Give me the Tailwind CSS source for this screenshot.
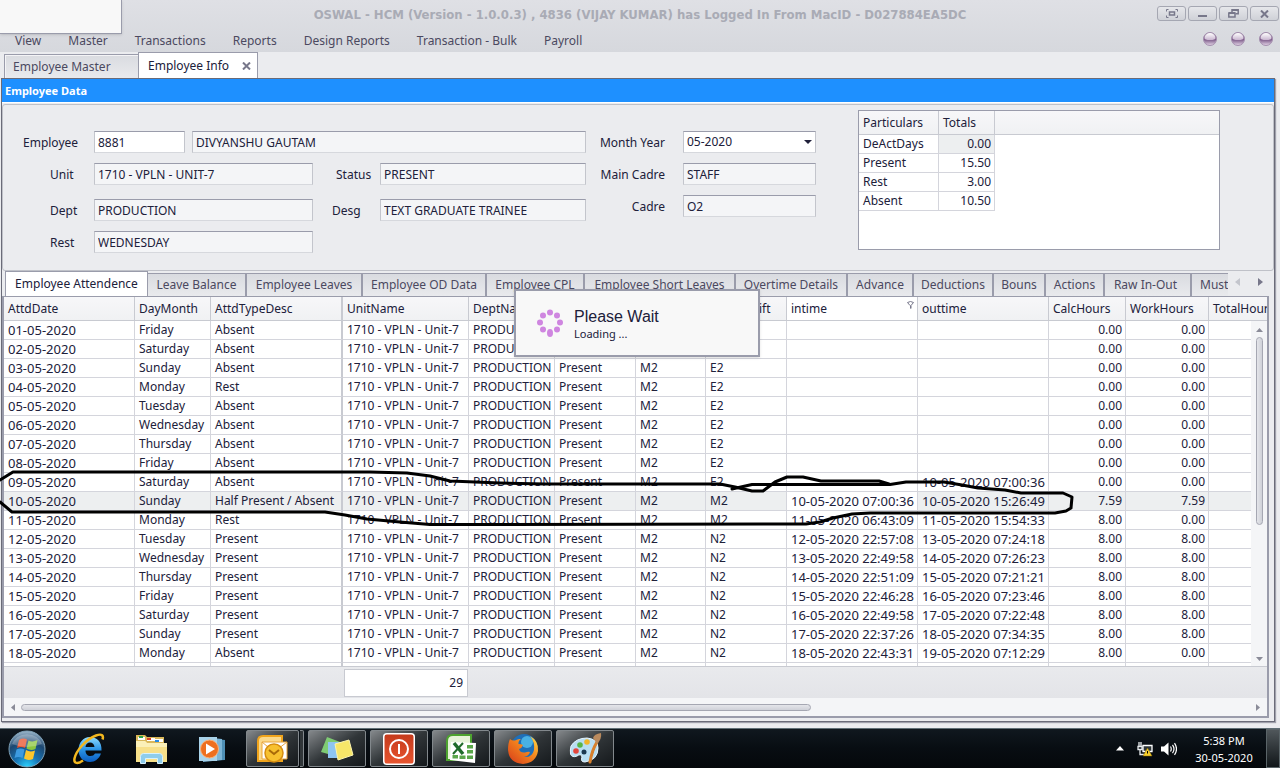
<!DOCTYPE html>
<html lang="en">
<head>
<meta charset="utf-8">
<title>OSWAL - HCM</title>
<script src="https://cdn.jsdelivr.net/npm/@tailwindcss/browser@4"></script>
</head>
<body class="relative flex h-screen flex-col overflow-hidden bg-[#ebecef] font-['Noto_Sans','DejaVu_Sans_Condensed',sans-serif] text-[12px] leading-4 text-[#20203a]">

<!-- Title bar and menu -->
<header class="flex h-[52px] shrink-0 flex-col bg-linear-to-b from-[#dfe0e5] to-[#d6d8dd] text-[#4b4960]">
  <div class="relative flex h-[29px] items-center justify-center">
    <h1 class="font-['DejaVu_Sans_Condensed',sans-serif] text-[13px] font-bold text-[#a9abb5]">OSWAL - HCM (Version - 1.0.0.3) , 4836 (VIJAY KUMAR) has Logged In From MacID - D027884EA5DC</h1>
    <div class="absolute top-[6px] right-px flex gap-[2px]">
      <button aria-label="Full screen" class="flex h-[15px] w-[29px] items-center justify-center rounded-[3px] border border-[#a5a7b2] bg-linear-to-b from-[#e6e7eb] to-[#cfd1d7]">
        <svg width="12" height="9" viewBox="0 0 12 9" fill="none" stroke="#77778a"><path d="M.5 2.500V.5h2M9.500.5h2v2M11.500 6.500v2h-2M2.500 8.500h-2v-2"/><rect x="3.500" y="3" width="5" height="3" stroke-width="1.500"/></svg>
      </button>
      <button aria-label="Minimize" class="flex h-[15px] w-[29px] items-center justify-center rounded-[3px] border border-[#a5a7b2] bg-linear-to-b from-[#e6e7eb] to-[#cfd1d7]">
        <svg width="9" height="9" viewBox="0 0 9 9"><path fill="#77778a" d="M0 6h9v2H0z"/></svg>
      </button>
      <button aria-label="Restore" class="flex h-[15px] w-[29px] items-center justify-center rounded-[3px] border border-[#a5a7b2] bg-linear-to-b from-[#e6e7eb] to-[#cfd1d7]">
        <svg width="11" height="9" viewBox="0 0 11 9" fill="none" stroke="#77778a" stroke-width="1.500"><path d="M4 3V.8h6.200v4H7.500"/><path d="M4 1h6" stroke-width="2"/><path d="M.8 4h6.200v4H.8z"/><path d="M1 4h6" stroke-width="2"/></svg>
      </button>
      <button aria-label="Close" class="flex h-[15px] w-[29px] items-center justify-center rounded-[3px] border border-[#a5a7b2] bg-linear-to-b from-[#e6e7eb] to-[#cfd1d7]">
        <svg width="9" height="8" viewBox="0 0 9 8"><path stroke="#77778a" stroke-width="2" d="M1 .5l7 7M8 .5l-7 7"/></svg>
      </button>
    </div>
  </div>
  <div class="flex items-center justify-between">
    <nav class="flex h-[23px] items-center gap-[27px] pl-[15px]">
      <button>View</button><button>Master</button><button>Transactions</button><button>Reports</button><button>Design Reports</button><button>Transaction - Bulk</button><button>Payroll</button>
    </nav>
    <div class="flex gap-[14px] pr-[7px] pb-1" aria-hidden="true">
      <svg width="14" height="14" viewBox="0 0 14 14"><defs><linearGradient id="orbHi" x2="0" y2="1"><stop offset="0" stop-color="#fff"/><stop offset="1" stop-color="#c9b6d0"/></linearGradient><linearGradient id="orbLo" x2="0" y2="1"><stop offset="0" stop-color="#7a5b86"/><stop offset=".55" stop-color="#7d5c8a"/><stop offset="1" stop-color="#e6d8ea"/></linearGradient></defs><g id="orb"><circle cx="7" cy="7" r="6.500" fill="url(#orbLo)" stroke="#a48fae"/><path d="M1.500 6a5.500 5 0 0 1 11 0q0 2-5.500 2t-5.500-2z" fill="url(#orbHi)"/></g></svg>
      <svg width="14" height="14" viewBox="0 0 14 14"><use href="#orb"/></svg>
      <svg width="14" height="14" viewBox="0 0 14 14"><use href="#orb"/></svg>
    </div>
  </div>
</header>
<div class="absolute top-0 left-0 h-[34px] w-[122px] border-r border-b border-[#9a9cab] bg-[#f8f8f8] shadow-sm"></div>

<!-- Document tabs -->
<div class="flex h-[26px] shrink-0 items-end pl-1" role="tablist">
  <button role="tab" class="h-6 w-[134px] border border-r-0 border-b-0 border-[#9a9cab] bg-linear-to-b from-[#d9dbe0] to-[#e9eaed] pl-2 text-left text-[#4b4960] shadow-[inset_1px_1px_0_#f4f4f6]">Employee Master</button>
  <div role="tab" aria-selected="true" class="flex h-[26px] w-[120px] items-center justify-between border border-b-0 border-[#9a9cab] bg-white pr-[6px] pl-[9px]">
    <span>Employee Info</span>
    <button aria-label="Close tab"><svg width="9" height="8" viewBox="0 0 9 8"><path stroke="#77778a" stroke-width="2" d="M1 .5l7 7M8 .5l-7 7"/></svg></button>
  </div>
</div>

<main class="mr-[5px] mb-[5px] ml-px flex min-h-0 flex-1 flex-col border border-[#6a6b78] bg-[#ebecef] shadow-[1px_1px_1px_#a0a1ac]">
  <h2 class="flex h-6 shrink-0 items-center border-b border-white bg-[#1e90ff] pl-[3px] text-[11px] font-bold text-white">Employee Data</h2>

  <!-- Employee form -->
  <form class="mt-px flex h-[167px] shrink-0 rounded-[3px] border border-[#bfc1c8]">
    <div class="flex w-[583px] flex-col pt-[26px]">
      <div class="flex items-center">
        <label for="emp" class="w-[91px] pt-[2px] pl-5">Employee</label>
        <input id="emp" value="8881" class="h-[22px] w-[91px] border border-t-[#9a9cab] border-r-[#c3c5cc] border-b-[#d6d8dd] border-l-[#c3c5cc] bg-white px-[3px]">
        <input aria-label="Employee name" readonly value="DIVYANSHU GAUTAM" class="ml-[7px] h-[22px] min-w-0 flex-1 border border-t-[#9a9cab] border-r-[#c3c5cc] border-b-[#d6d8dd] border-l-[#c3c5cc] bg-[#f4f5f7] px-[3px]">
      </div>
      <div class="mt-[10px] flex items-center">
        <label for="unit" class="w-[91px] pt-[2px] pl-[47px]">Unit</label>
        <input id="unit" readonly value="1710 - VPLN - UNIT-7" class="h-[22px] w-[219px] border border-t-[#9a9cab] border-r-[#c3c5cc] border-b-[#d6d8dd] border-l-[#c3c5cc] bg-[#f4f5f7] px-[3px]">
        <label for="status" class="w-[67px] pt-[2px] pl-[23px]">Status</label>
        <input id="status" readonly value="PRESENT" class="h-[22px] min-w-0 flex-1 border border-t-[#9a9cab] border-r-[#c3c5cc] border-b-[#d6d8dd] border-l-[#c3c5cc] bg-[#f4f5f7] px-[3px]">
      </div>
      <div class="mt-[14px] flex items-center">
        <label for="dept" class="w-[91px] pt-[2px] pl-[47px]">Dept</label>
        <input id="dept" readonly value="PRODUCTION" class="h-[22px] w-[219px] border border-t-[#9a9cab] border-r-[#c3c5cc] border-b-[#d6d8dd] border-l-[#c3c5cc] bg-[#f4f5f7] px-[3px]">
        <label for="desg" class="w-[67px] pt-[2px] pl-[19px]">Desg</label>
        <input id="desg" readonly value="TEXT GRADUATE TRAINEE" class="h-[22px] min-w-0 flex-1 border border-t-[#9a9cab] border-r-[#c3c5cc] border-b-[#d6d8dd] border-l-[#c3c5cc] bg-[#f4f5f7] px-[3px]">
      </div>
      <div class="mt-[10px] flex items-center">
        <label for="rest" class="w-[91px] pt-[2px] pl-[47px]">Rest</label>
        <input id="rest" readonly value="WEDNESDAY" class="h-[22px] w-[219px] border border-t-[#9a9cab] border-r-[#c3c5cc] border-b-[#d6d8dd] border-l-[#c3c5cc] bg-[#f4f5f7] px-[3px]">
      </div>
    </div>
    <div class="flex w-[230px] flex-col gap-[10px] pt-[26px]">
      <div class="flex items-center gap-[18px]">
        <label for="month" class="w-[79px] pt-[2px] text-right">Month Year</label>
        <div class="relative h-[22px] flex-1">
          <select id="month" class="h-[22px] w-full appearance-none border border-t-[#9a9cab] border-r-[#c3c5cc] border-b-[#d6d8dd] border-l-[#c3c5cc] bg-white px-[3px]"><option>05-2020</option></select>
          <svg class="pointer-events-none absolute top-[9px] right-[4px]" width="8" height="4" viewBox="0 0 8 4"><path fill="#20203a" d="M0 0h8L4 4z"/></svg>
        </div>
      </div>
      <div class="flex items-center gap-[18px]">
        <label for="mcadre" class="w-[79px] pt-[2px] text-right">Main Cadre</label>
        <input id="mcadre" readonly value="STAFF" class="h-[22px] min-w-0 flex-1 border border-t-[#9a9cab] border-r-[#c3c5cc] border-b-[#d6d8dd] border-l-[#c3c5cc] bg-[#f4f5f7] px-[3px]">
      </div>
      <div class="flex items-center gap-[18px]">
        <label for="cadre" class="w-[79px] pt-[2px] text-right">Cadre</label>
        <input id="cadre" readonly value="O2" class="h-[22px] min-w-0 flex-1 border border-t-[#9a9cab] border-r-[#c3c5cc] border-b-[#d6d8dd] border-l-[#c3c5cc] bg-[#f4f5f7] px-[3px]">
      </div>
    </div>
    <div class="mt-[5px] mr-[53px] ml-[42px] h-[140px] flex-1 border border-[#9a9cab] bg-white">
      <div class="flex h-6 border-b border-[#c8cad1] bg-linear-to-b from-[#f7f7f9] to-[#f0f1f3]"></div>
      <table class="-mt-6 table-fixed border-separate border-spacing-0 whitespace-nowrap">
        <colgroup><col class="w-[80px]"><col class="w-[56px]"></colgroup>
        <thead><tr class="h-6"><th class="border-r border-b border-[#c8cad1] px-1 text-left font-normal">Particulars</th><th class="border-r border-b border-[#c8cad1] px-1 text-left font-normal">Totals</th></tr></thead>
        <tbody>
          <tr class="h-[19px]"><td class="border-r border-b border-[#d4d5dc] px-1">DeActDays</td><td class="border-r border-b border-[#d4d5dc] bg-[#edeff0] px-[3px] text-right">0.00</td></tr>
          <tr class="h-[19px]"><td class="border-r border-b border-[#d4d5dc] px-1">Present</td><td class="border-r border-b border-[#d4d5dc] px-[3px] text-right">15.50</td></tr>
          <tr class="h-[19px]"><td class="border-r border-b border-[#d4d5dc] px-1">Rest</td><td class="border-r border-b border-[#d4d5dc] px-[3px] text-right">3.00</td></tr>
          <tr class="h-[19px]"><td class="border-r border-b border-[#d4d5dc] px-1">Absent</td><td class="border-r border-b border-[#d4d5dc] px-[3px] text-right">10.50</td></tr>
        </tbody>
      </table>
    </div>
  </form>

  <!-- Detail tabs -->
  <div class="flex h-[25px] shrink-0 items-end pl-[3px]">
    <div role="tablist" class="flex min-w-0 flex-1 items-end overflow-hidden whitespace-nowrap text-[#4b4960]">
      <button role="tab" aria-selected="true" class="h-[25px] w-[143px] shrink-0 border border-b-0 border-[#9a9cab] bg-white text-[#20203a]">Employee Attendence</button>
      <button role="tab" class="h-[23px] w-[99px] shrink-0 border-t border-r-2 border-[#9a9cab] bg-linear-to-b from-[#d9dbe0] to-[#e9eaed]">Leave Balance</button>
      <button role="tab" class="h-[23px] w-[116px] shrink-0 border-t border-r-2 border-[#9a9cab] bg-linear-to-b from-[#d9dbe0] to-[#e9eaed]">Employee Leaves</button>
      <button role="tab" class="h-[23px] w-[124px] shrink-0 border-t border-r-2 border-[#9a9cab] bg-linear-to-b from-[#d9dbe0] to-[#e9eaed]">Employee OD Data</button>
      <button role="tab" class="h-[23px] w-[98px] shrink-0 border-t border-r-2 border-[#9a9cab] bg-linear-to-b from-[#d9dbe0] to-[#e9eaed]">Employee CPL</button>
      <button role="tab" class="h-[23px] w-[151px] shrink-0 border-t border-r-2 border-[#9a9cab] bg-linear-to-b from-[#d9dbe0] to-[#e9eaed]">Employee Short Leaves</button>
      <button role="tab" class="h-[23px] w-[112px] shrink-0 border-t border-r-2 border-[#9a9cab] bg-linear-to-b from-[#d9dbe0] to-[#e9eaed]">Overtime Details</button>
      <button role="tab" class="h-[23px] w-[66px] shrink-0 border-t border-r-2 border-[#9a9cab] bg-linear-to-b from-[#d9dbe0] to-[#e9eaed]">Advance</button>
      <button role="tab" class="h-[23px] w-[80px] shrink-0 border-t border-r-2 border-[#9a9cab] bg-linear-to-b from-[#d9dbe0] to-[#e9eaed]">Deductions</button>
      <button role="tab" class="h-[23px] w-[52px] shrink-0 border-t border-r-2 border-[#9a9cab] bg-linear-to-b from-[#d9dbe0] to-[#e9eaed]">Bouns</button>
      <button role="tab" class="h-[23px] w-[59px] shrink-0 border-t border-r-2 border-[#9a9cab] bg-linear-to-b from-[#d9dbe0] to-[#e9eaed]">Actions</button>
      <button role="tab" class="h-[23px] w-[87px] shrink-0 border-t border-r-2 border-[#9a9cab] bg-linear-to-b from-[#d9dbe0] to-[#e9eaed] pr-1">Raw In-Out</button>
      <button role="tab" class="h-[23px] w-[64px] shrink-0 border-t border-[#9a9cab] bg-linear-to-b from-[#d9dbe0] to-[#e9eaed] pl-2 text-left">Muster</button>
    </div>
    <div class="flex h-[25px] w-[46px] items-center justify-center gap-[18px] pr-1 pb-1">
      <button aria-label="Scroll tabs left"><svg width="5" height="8" viewBox="0 0 5 8"><path fill="#c3c5cc" d="M5 0v8L0 4z"/></svg></button>
      <button aria-label="Scroll tabs right"><svg width="5" height="8" viewBox="0 0 5 8"><path fill="#77778a" d="M0 0v8l5-4z"/></svg></button>
    </div>
  </div>

  <!-- Attendance grid -->
  <section class="mr-[5px] mb-[3px] flex min-h-0 flex-1 flex-col border-2 border-t border-[#9a9cab] bg-[#f4f5f7]">
    <div class="relative min-h-0 flex-1 overflow-hidden bg-white">
      <table class="w-full table-fixed border-separate border-spacing-0 whitespace-nowrap">
        <colgroup><col class="w-[131px]"><col class="w-[76px]"><col class="w-[132px]"><col class="w-[126px]"><col class="w-[86px]"><col class="w-[81px]"><col class="w-[70px]"><col class="w-[81px]"><col class="w-[131px]"><col class="w-[131px]"><col class="w-[77px]"><col class="w-[83px]"><col></colgroup>
        <thead id="head"></thead>
        <tbody id="rows"></tbody>
      </table>
      <!-- Vertical scrollbar, over the grid's right edge below the header -->
      <div class="absolute top-6 right-0 bottom-0 flex w-4 flex-col items-center bg-[#f4f5f7] pb-[5px]">
        <svg class="mt-[7px]" width="7" height="4" viewBox="0 0 7 4"><path fill="#8a8b98" d="M0 4h7L3.500 0z"/></svg>
        <div class="mt-[5px] h-[188px] w-[7px] shrink-0 rounded-full border border-[#a5a7b2] bg-linear-to-r from-[#e4e5ea] to-[#cfd1d8]"></div>
        <div class="flex-1"></div>
        <svg width="7" height="4" viewBox="0 0 7 4"><path fill="#8a8b98" d="M0 0h7L3.500 4z"/></svg>
      </div>
    </div>
    <div class="flex h-8 shrink-0 border-t border-[#c8cad1] bg-linear-to-b from-[#e9eaed] to-[#e3e4e8] pt-[2px] pl-[340px]">
      <div class="flex h-[28px] w-[124px] items-center justify-end border border-[#c8cad1] bg-white pr-1">29</div>
    </div>
    <div class="flex h-[18px] shrink-0 items-center px-[7px]">
      <svg width="4" height="7" viewBox="0 0 4 7"><path fill="#8a8b98" d="M4 0v7L0 3.500z"/></svg>
      <div class="ml-[6px] h-[7px] w-[790px] rounded-full border border-[#a5a7b2] bg-linear-to-b from-[#e4e5ea] to-[#cfd1d8]"></div>
      <div class="flex-1"></div>
      <svg width="4" height="7" viewBox="0 0 4 7"><path fill="#8a8b98" d="M0 0v7l4-3.500z"/></svg>
    </div>
  </section>
</main>

<!-- Wait dialog -->
<div role="status" class="absolute top-[289px] left-[514px] flex h-[68px] w-[246px] items-center border-2 border-[#9a9cab] bg-[#f8f8f8] pl-[21px] shadow-sm">
  <svg width="26" height="28" viewBox="0 0 26 28" fill="#cf86e0"><circle cx="13" cy="3.500" r="3"/><circle cx="20" cy="6.500" r="3"/><circle cx="23" cy="13.500" r="3"/><circle cx="20" cy="20.500" r="3"/><ellipse cx="13" cy="24" rx="3" ry="4"/><circle cx="6" cy="20.500" r="3"/><circle cx="3" cy="13.500" r="3"/><circle cx="6" cy="6.500" r="3"/></svg>
  <div class="pt-[3px] pl-[11px]">
    <p class="font-['Liberation_Sans',sans-serif] text-[16px] leading-[18px]">Please Wait</p>
    <p class="text-[11px] leading-4">Loading ...</p>
  </div>
</div>

<!-- Pen annotation -->
<svg class="pointer-events-none absolute top-[465px] left-0" width="1080" height="66" viewBox="0 465 1080 66" fill="none" stroke="#000" stroke-width="3" stroke-linejoin="round" stroke-linecap="round">
  <path d="M0 480L13 472 370 472 407 473 430 476 450 481 500 483 545 484 720 484 735 487 752 491 763 491 775 482 787 477 803 477 821 481 879 481 889 484"/>
  <path d="M732 489L752 484.500 890 484.500 906 482 944 482 962 485 978 488 1005 490 1021 493 1063 493 1072 497 1071 508 1066 511 1055 513 870 513 852 514 833 518 820 522 806 524 430 524.500 400 522 367 519 345 515 325 512 12 512 0 502"/>
</svg>

<!-- Taskbar -->
<footer class="mt-px flex h-10 shrink-0 items-stretch border-t border-[#5f6e75] bg-linear-to-b from-[#10181f] via-[#080d12] to-[#05080b] text-white">
  <button aria-label="Start" class="flex w-[54px] items-center justify-center">
    <svg width="38" height="38" viewBox="0 0 38 38"><defs><radialGradient id="so" cx=".5" cy="1" r="1"><stop offset="0" stop-color="#2bd4ff"/><stop offset=".35" stop-color="#1773b4"/><stop offset=".7" stop-color="#1d4770"/><stop offset="1" stop-color="#9fb9cc"/></radialGradient></defs><circle cx="19" cy="19" r="18" fill="url(#so)" stroke="#7fa2b8"/><path fill="#e8502a" d="M11 10q4-2.500 8-.5l-2 8.500q-4-2-8 0z"/><path fill="#8cc63f" d="M20.500 10.500q4 2 9-.5l-2 9q-5 2-9-.5z"/><path fill="#3d9be0" d="M8.500 19.500q4-2 8 0l-2 8.500q-4-2-8 0z"/><path fill="#fcc62c" d="M18 20q4 2.500 9 .5l-2 8.500q-5 2-9-.5z"/><path fill="#fff" opacity=".25" d="M4 14a15.500 13 0 0 1 30 0q-15 6-30 0z"/></svg>
  </button>
  <button aria-label="Internet Explorer" class="flex w-[70px] items-center justify-center">
    <svg width="34" height="32" viewBox="0 0 34 32"><defs><linearGradient id="ie" x2="0" y2="1"><stop offset="0" stop-color="#8fdcff"/><stop offset=".5" stop-color="#2a94e6"/><stop offset="1" stop-color="#0a5cc0"/></linearGradient></defs><path fill="url(#ie)" d="M18 4c7 0 12 5 11.500 13.500H13.500c0 3.500 2 5.500 5 5.500 2.200 0 3.500-.8 4.500-2.500h6C27 26 23 29 18 29 11 29 6.500 24 6.500 17S11 4 18 4zm-4.500 10h9c-.3-3-2-4.500-4.500-4.500s-4.200 1.500-4.500 4.500z"/><path fill="none" stroke="#f3b81f" stroke-width="2.500" d="M11 27.500C6 31 1.500 31 2.500 25.500 4 18 14 6 24 2.500c5.500-2 8-.5 6.500 4"/></svg>
  </button>
  <button aria-label="Windows Explorer" class="flex w-[54px] items-center justify-center">
    <svg width="34" height="32" viewBox="0 0 34 32"><path fill="#d9b75a" d="M2 6V2h9l2 2h17v25H2z"/><path fill="#fff" d="M4 4h7v3H4zM13 5h8v3h-8zM21 6h8v3h-8z"/><path fill="#2aa54a" d="M5 3h4v2H5z"/><path fill="#d8412a" d="M13 5h4v2h-4z"/><path fill="#2b8be0" d="M21 7h4v2h-4z"/><path fill="#f7e08a" d="M2 8h9l2 2h20v19H2z"/><path fill="#fbf0b8" d="M2 8h9l2 2h20v4H2z"/><path fill="#8fcdec" stroke="#d6f2ff" d="M6.500 30.500v-7q0-3 3-3h16q3 0 3 3v7h-5v-5h-12v5z"/></svg>
  </button>
  <button aria-label="Media Player" class="flex w-[68px] items-center justify-center">
    <svg width="28" height="28" viewBox="0 0 28 28"><path fill="#4f8fb5" d="M8 3l19 2v20l-19 1z"/><path fill="#7db5d6" d="M5 2l19 2v21L5 27z"/><path fill="#a9d3ea" d="M1 2h18v24H1z"/><circle cx="11.500" cy="14" r="9" fill="#ee6f1f" stroke="#f9b27a"/><path fill="#fff" d="M8 8.500v11l9-5.500z"/></svg>
  </button>
  <div class="flex gap-1 py-px">
    <div class="flex w-[58px] gap-px">
      <button aria-label="Outlook" class="flex w-[53px] items-center justify-center rounded-[2px] border border-[#82888c] bg-linear-to-br from-[#85898c] via-[#303538] to-[#15191c]">
        <svg width="33" height="30" viewBox="0 0 33 30"><path fill="#fbd98a" stroke="#f0a41c" stroke-width="2" d="M2 27V7q0-5 5-5h19v25z"/><path fill="#fff" stroke="#e9a63a" d="M6 8h25v17H6z"/><path fill="none" stroke="#e9a63a" d="M6 8l12 10L31 8"/><circle cx="18" cy="19" r="9" fill="#f7c12f" stroke="#d68d10" stroke-width="1.500"/><path fill="none" stroke="#a86a08" stroke-width="2" d="M13 16l5 4 5-4"/></svg>
      </button>
      <div class="w-[4px] rounded-r-[2px] border border-l-0 border-[#82888c] bg-[#303538]"></div>
    </div>
    <button aria-label="Sticky Notes" class="flex w-[58px] items-center justify-center rounded-[2px] border border-[#82888c] bg-linear-to-br from-[#85898c] via-[#303538] to-[#15191c]">
      <svg width="34" height="28" viewBox="0 0 34 28"><path fill="#7fcb74" d="M7 2l13 5-5 14-14-4z"/><path fill="#8ec5f2" d="M8 7h14v16H8z"/><path fill="#f7e669" stroke="#fdf5ae" d="M15 9l14-4 4 15-15 5z"/></svg>
    </button>
    <button aria-label="Power" class="flex w-[58px] items-center justify-center rounded-[2px] border border-[#82888c] bg-linear-to-br from-[#85898c] via-[#303538] to-[#15191c]">
      <svg width="32" height="32" viewBox="0 0 32 32"><defs><linearGradient id="pw" x2="0" y2="1"><stop offset="0" stop-color="#c43a1c"/><stop offset="1" stop-color="#e8552f"/></linearGradient></defs><rect x=".75" y=".75" width="30.500" height="30.500" rx="3" fill="url(#pw)" stroke="#fff" stroke-width="1.500"/><circle cx="16" cy="16" r="9" fill="none" stroke="#fff" stroke-width="2"/><path stroke="#fff" stroke-width="2" d="M16 11v10"/></svg>
    </button>
    <button aria-label="Excel" class="flex w-[58px] items-center justify-center rounded-[2px] border border-[#82888c] bg-linear-to-br from-[#85898c] via-[#303538] to-[#15191c]">
      <svg width="32" height="30" viewBox="0 0 32 30"><path fill="#e6f3d8" stroke="#4da32f" stroke-width="2" d="M2 26V7q0-6 6-6h18v25z"/><path fill="#fff" d="M6 8l25 1-1 20-25-3z"/><path fill="#5aa64a" d="M22 11h6v3.500h-6zM22 16h6v3.500h-6zM22 21.500h6V25h-6zM14.500 21.500h6V25h-6zM7.500 21h5.500v3.500H7.500z"/><path stroke="#1f6b2a" stroke-width="3.500" d="M9 9l9 11"/><path stroke="#1f6b2a" stroke-width="2" d="M18 9L8 20"/></svg>
    </button>
    <button aria-label="Firefox" class="flex w-[58px] items-center justify-center rounded-[2px] border border-[#82888c] bg-linear-to-br from-[#85898c] via-[#303538] to-[#15191c]">
      <svg width="32" height="32" viewBox="0 0 32 32"><defs><linearGradient id="fx" x1="1" y1="0" x2="0" y2="1"><stop offset="0" stop-color="#ffe14a"/><stop offset=".4" stop-color="#f58a1f"/><stop offset="1" stop-color="#d6391a"/></linearGradient></defs><circle cx="17" cy="14" r="13" fill="#1f6fb8"/><circle cx="20" cy="9" r="6" fill="#49b0e4"/><path fill="url(#fx)" d="M3 6q2 2 5 1.500 3-2 6-1.500-3 2-2.500 5 3 0 4.500 1-1 3-4 4 1 4 6 3.500 3-1 5-.5-1 4-6 5 8 1 10-7 1-8-4-14 9 5 8 15-2 12-15 13Q2 30 1 17 1 10 3 6z"/></svg>
    </button>
    <button aria-label="Paint" class="flex w-[58px] items-center justify-center rounded-[2px] border border-[#82888c] bg-linear-to-br from-[#85898c] via-[#303538] to-[#15191c]">
      <svg width="34" height="32" viewBox="0 0 34 32"><path fill="#b9def2" stroke="#e8f7ff" d="M3 13Q8 5 19 5q11 1 11 10 0 12-13 14-5 0-3-5-1-4-5-1Q4 25 2.500 21 2 17 3 13z"/><circle cx="8" cy="18" r="2.800" fill="#e2463c"/><circle cx="12" cy="12" r="2.800" fill="#58b548"/><circle cx="19" cy="9" r="2.800" fill="#f1b42a"/><circle cx="16" cy="19" r="2.500" fill="#1c3950"/><path stroke="#d8802c" stroke-width="3" stroke-linecap="round" d="M22 29q2-12 7-20"/><path fill="#b98a5e" d="M25 5q1-4 8-5 1 6-4 11z"/></svg>
    </button>
  </div>
  <div class="ml-auto flex items-center">
    <svg class="mr-[13px]" width="8" height="5" viewBox="0 0 8 5"><path fill="#fff" d="M0 4.500h8L4 0z"/></svg>
    <svg class="mr-2" width="16" height="16" viewBox="0 0 16 16"><path fill="none" stroke="#e8ecef" stroke-width="1.300" d="M2 1v5M4 1v5M1 5.500h4v3H1zM3 8.500v5h4"/><path fill="#2c3438" stroke="#fff" stroke-width="1.300" d="M6 4.500h9v6H6zM10 10.500v2.500M7 13.500h7"/><path fill="#f7cf2d" stroke="#8a6a00" stroke-width=".5" d="M10.500 7l4.500 8H6z"/><path stroke="#000" d="M10.500 10v2.500"/></svg>
    <svg class="mr-[17px]" width="16" height="14" viewBox="0 0 16 14"><path fill="#fff" d="M0 4.500h3L7.500.5v13L3 9.500H0z"/><path fill="none" stroke="#fff" stroke-width="1.200" d="M9.500 4.500q1.500 2.500 0 5M11.500 2.800q3 4.200 0 8.400M13.500 1.200q4 5.800 0 11.600"/></svg>
    <div class="w-[60px] text-center text-[11px] leading-[17px]"><p>5:38 PM</p><p class="whitespace-nowrap">30-05-2020</p></div>
    <button aria-label="Show desktop" class="ml-[12px] h-full w-[14px] border border-[#5a6468] bg-linear-to-b from-[#50575b] to-[#12171a]"></button>
  </div>
</footer>

<script>
const heads = ['AttdDate', 'DayMonth', 'AttdTypeDesc', 'UnitName', 'DeptName', 'Status', 'MShift', 'ActualShift', 'intime', 'outtime', 'CalcHours', 'WorkHours', 'TotalHour'];
const data = [
  ['01', 'Friday', 'Absent', 'E2', '', '', '0.00', '0.00'],
  ['02', 'Saturday', 'Absent', 'E2', '', '', '0.00', '0.00'],
  ['03', 'Sunday', 'Absent', 'E2', '', '', '0.00', '0.00'],
  ['04', 'Monday', 'Rest', 'E2', '', '', '0.00', '0.00'],
  ['05', 'Tuesday', 'Absent', 'E2', '', '', '0.00', '0.00'],
  ['06', 'Wednesday', 'Absent', 'E2', '', '', '0.00', '0.00'],
  ['07', 'Thursday', 'Absent', 'E2', '', '', '0.00', '0.00'],
  ['08', 'Friday', 'Absent', 'E2', '', '', '0.00', '0.00'],
  ['09', 'Saturday', 'Absent', 'E2', '', '10-05-2020 07:00:36', '0.00', '0.00'],
  ['10', 'Sunday', 'Half Present / Absent', 'M2', '10-05-2020 07:00:36', '10-05-2020 15:26:49', '7.59', '7.59'],
  ['11', 'Monday', 'Rest', 'M2', '11-05-2020 06:43:09', '11-05-2020 15:54:33', '8.00', '0.00'],
  ['12', 'Tuesday', 'Present', 'N2', '12-05-2020 22:57:08', '13-05-2020 07:24:18', '8.00', '8.00'],
  ['13', 'Wednesday', 'Present', 'N2', '13-05-2020 22:49:58', '14-05-2020 07:26:23', '8.00', '8.00'],
  ['14', 'Thursday', 'Present', 'N2', '14-05-2020 22:51:09', '15-05-2020 07:21:21', '8.00', '8.00'],
  ['15', 'Friday', 'Present', 'N2', '15-05-2020 22:46:28', '16-05-2020 07:23:46', '8.00', '8.00'],
  ['16', 'Saturday', 'Present', 'N2', '16-05-2020 22:49:58', '17-05-2020 07:22:48', '8.00', '8.00'],
  ['17', 'Sunday', 'Present', 'N2', '17-05-2020 22:37:26', '18-05-2020 07:34:35', '8.00', '8.00'],
  ['18', 'Monday', 'Absent', 'N2', '18-05-2020 22:43:31', '19-05-2020 07:12:29', '8.00', '0.00'],
  null
];
const funnel = '<svg class="absolute top-1 right-[3px]" width="7" height="8" viewBox="0 0 7 8"><path fill="none" stroke="#77778a" d="M.5 1.500q3-2 6 0L4 4.500v3M3.500 4.500v3M.5 1.500L3 4.500"/></svg>';
document.getElementById('head').innerHTML = '<tr class="h-6">' + heads.map((h, i) => {
  const edge = i === 2 ? 'border-r-2' : i === 12 ? 'border-r-0' : 'border-r';
  const fill = i === 8 ? 'bg-white' : 'bg-linear-to-b from-[#f7f7f9] to-[#f0f1f3]';
  return `<th class="relative ${edge} ${fill} border-b border-[#c8cad1] pl-1 text-left font-normal">${h}${i === 8 ? funnel : ''}</th>`;
}).join('') + '</tr>';
document.getElementById('rows').innerHTML = data.map(r => {
  const cells = r ? [r[0] + '-05-2020', r[1], r[2], '1710 - VPLN - Unit-7', 'PRODUCTION', 'Present', 'M2', r[3], r[4], r[5], r[6], r[7], ''] : Array(13).fill('');
  const sel = r && r[0] === '10';
  return '<tr class="h-[19px]">' + cells.map((c, i) => {
    const edge = i === 2 ? 'border-r-2 border-r-[#c8cad1]' : 'border-r border-r-[#d4d5dc]';
    const fill = sel && i !== 8 ? 'bg-[#edeff0]' : 'bg-white';
    const align = i > 9 ? 'text-right' : 'text-left';
    const size = i === 0 || i === 8 || i === 9 ? 'text-[13px]' : 'text-[12px]';
    return `<td class="${edge} ${fill} ${align} ${size} border-b border-b-[#d4d5dc] pr-[3px] pl-1 leading-4">${c}</td>`;
  }).join('') + '</tr>';
}).join('');
</script>
</body>
</html>
